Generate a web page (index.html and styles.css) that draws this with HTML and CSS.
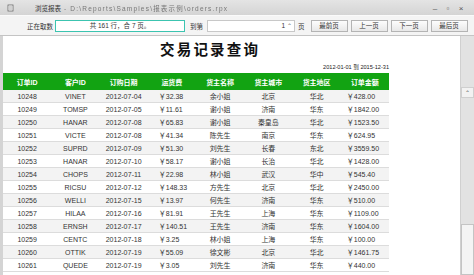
FILE: index.html
```html
<!DOCTYPE html>
<html>
<head>
<meta charset="utf-8">
<link rel="stylesheet" href="styles.css">
</head>
<body>
<div class="window">
  <div class="titlebar">
    <svg class="appicon" width="8" height="8" viewBox="0 0 8 8"><rect x="1" y="1" width="5" height="6" fill="#fff" stroke="#666" stroke-width="0.8"/><path d="M2 3h3M2 5h3" stroke="#666" stroke-width="0.6"/></svg>
    <span class="ttext">浏览报表</span>
    <span class="tpath">- D:\Reports\Samples\报表示例\orders.rpx</span>
    <span class="tspacer"></span>
    <span class="wctl">–</span>
    <span class="wctl">▫</span>
    <span class="wctl">×</span>
  </div>
  <div class="toolbar">
    <span class="lbl">正在取数</span>
    <div class="info">共 161 行，合 7 页。</div>
    <span class="lbl2">到第</span>
    <div class="pageinput"><span>1</span><span class="spin">⌃</span></div>
    <span class="lbl3">页</span>
    <div class="btns">
      <div class="btn">最前页</div>
      <div class="btn">上一页</div>
      <div class="btn">下一页</div>
      <div class="btn">最后页</div>
    </div>
  </div>
  <div class="main">
    <div class="leftedge"></div>
    <div class="content">
      <div class="rtitle">交易记录查询</div>
      <div class="rdate">2012-01-01 到 2015-12-31</div>
      <table class="grid">
        <thead>
          <tr><th>订单ID</th><th>客户ID</th><th>订购日期</th><th>运货费</th><th>货主名称</th><th>货主城市</th><th>货主地区</th><th>订单金额</th></tr>
        </thead>
        <tbody>
          <tr><td>10248</td><td>VINET</td><td>2012-07-04</td><td class="fee">￥32.38</td><td>余小姐</td><td>北京</td><td>华北</td><td class="amt">￥428.00</td></tr>
          <tr><td>10249</td><td>TOMSP</td><td>2012-07-05</td><td class="fee">￥11.61</td><td>谢小姐</td><td>济南</td><td>华东</td><td class="amt">￥1842.00</td></tr>
          <tr><td>10250</td><td>HANAR</td><td>2012-07-08</td><td class="fee">￥65.83</td><td>谢小姐</td><td>秦皇岛</td><td>华北</td><td class="amt">￥1523.50</td></tr>
          <tr><td>10251</td><td>VICTE</td><td>2012-07-08</td><td class="fee">￥41.34</td><td>陈先生</td><td>南京</td><td>华东</td><td class="amt">￥624.95</td></tr>
          <tr><td>10252</td><td>SUPRD</td><td>2012-07-09</td><td class="fee">￥51.30</td><td>刘先生</td><td>长春</td><td>东北</td><td class="amt">￥3559.50</td></tr>
          <tr><td>10253</td><td>HANAR</td><td>2012-07-10</td><td class="fee">￥58.17</td><td>谢小姐</td><td>长治</td><td>华北</td><td class="amt">￥1428.00</td></tr>
          <tr><td>10254</td><td>CHOPS</td><td>2012-07-11</td><td class="fee">￥22.98</td><td>林小姐</td><td>武汉</td><td>华中</td><td class="amt">￥545.40</td></tr>
          <tr><td>10255</td><td>RICSU</td><td>2012-07-12</td><td class="fee">￥148.33</td><td>方先生</td><td>北京</td><td>华北</td><td class="amt">￥2450.00</td></tr>
          <tr><td>10256</td><td>WELLI</td><td>2012-07-15</td><td class="fee">￥13.97</td><td>何先生</td><td>济南</td><td>华东</td><td class="amt">￥510.00</td></tr>
          <tr><td>10257</td><td>HILAA</td><td>2012-07-16</td><td class="fee">￥81.91</td><td>王先生</td><td>上海</td><td>华东</td><td class="amt">￥1109.00</td></tr>
          <tr><td>10258</td><td>ERNSH</td><td>2012-07-17</td><td class="fee">￥140.51</td><td>王先生</td><td>济南</td><td>华东</td><td class="amt">￥1604.00</td></tr>
          <tr><td>10259</td><td>CENTC</td><td>2012-07-18</td><td class="fee">￥3.25</td><td>林小姐</td><td>上海</td><td>华东</td><td class="amt">￥100.00</td></tr>
          <tr><td>10260</td><td>OTTIK</td><td>2012-07-19</td><td class="fee">￥55.09</td><td>徐文彬</td><td>北京</td><td>华北</td><td class="amt">￥1461.75</td></tr>
          <tr><td>10261</td><td>QUEDE</td><td>2012-07-19</td><td class="fee">￥3.05</td><td>刘先生</td><td>济南</td><td>华东</td><td class="amt">￥440.00</td></tr>
        </tbody>
      </table>
    </div>
    <div class="scroll">
      <div class="scrolltop"></div>
      <div class="sbtn">⌃</div>
      <div class="strack"></div>
      <div class="sthumb"></div>
    </div>
  </div>
</div>
</body>
</html>
```

FILE: styles.css
```css
html, body {
  margin: 0;
  padding: 0;
}
body {
  width: 474px;
  height: 275px;
  overflow: hidden;
  font-family: "Liberation Sans", "Noto Sans CJK SC", sans-serif;
  color: #333;
  background: #fff;
}
.window {
  display: flex;
  flex-direction: column;
  width: 474px;
  height: 275px;
}
.titlebar {
  height: 15px;
  flex: none;
  display: flex;
  align-items: center;
  background: linear-gradient(#e4e4e4, #d4d4d4);
  font-size: 6.5px;
  color: #444;
  box-sizing: border-box;
  padding: 1px 9px 0 7px;
}
.appicon {
  flex: none;
  margin-right: 20px;
}
.ttext {
  color: #333;
  margin-right: 3px;
}
.tpath {
  color: #777;
  filter: blur(0.7px);
  letter-spacing: 1.2px;
}
.tspacer {
  flex: 1;
}
.wctl {
  font-size: 8px;
  color: #555;
  margin-left: 5px;
  width: 8px;
  text-align: center;
}
.toolbar {
  height: 21px;
  flex: none;
  box-sizing: border-box;
  background: #f4f4f4;
  border-top: 1px solid #fafafa;
  border-bottom: 1px solid #c4c4c4;
  display: flex;
  align-items: center;
  padding: 0 0 0 27px;
  font-size: 6.5px;
  color: #333;
}
.lbl {
  width: 28px;
}
.info {
  width: 130px;
  height: 12px;
  box-sizing: border-box;
  border: 1px solid #3cc4b0;
  background: #fff;
  text-align: center;
  line-height: 10px;
}
.lbl2 {
  margin-left: 5px;
  width: 17px;
}
.pageinput {
  width: 88px;
  height: 12px;
  box-sizing: border-box;
  border: 1px solid #c8c8c8;
  background: #fff;
  display: flex;
  justify-content: flex-end;
  align-items: center;
  padding-right: 2px;
}
.spin {
  margin-left: 2px;
  font-size: 6px;
  color: #666;
}
.lbl3 {
  margin-left: 3px;
}
.btns {
  display: flex;
  gap: 3px;
  margin-left: 6px;
}
.btn {
  width: 37px;
  height: 12px;
  box-sizing: border-box;
  border: 1px solid #b4b4b4;
  background: linear-gradient(#fdfdfd, #e8e8e8);
  text-align: center;
  line-height: 10px;
  color: #333;
}
.main {
  flex: 1;
  display: flex;
  min-height: 0;
}
.leftedge {
  width: 3px;
  flex: none;
  background: #d4d4d4;
}
.content {
  flex: 1;
  background: #fff;
  overflow: hidden;
}
.rtitle {
  height: 26px;
  line-height: 26px;
  padding-left: 157px;
  font-family: "Noto Sans CJK SC", sans-serif;
  font-weight: bold;
  font-size: 14.5px;
  letter-spacing: 2.2px;
  color: #111;
}
.rdate {
  width: 386px;
  height: 11px;
  line-height: 11px;
  text-align: right;
  font-size: 5.6px;
  color: #222;
}
.grid {
  width: 386px;
  border-collapse: collapse;
  table-layout: fixed;
  font-size: 7px;
}
.grid th {
  height: 17px;
  padding: 0;
  background: #12a312;
  color: #fff;
  font-weight: bold;
  text-align: center;
}
.grid td {
  height: 12px;
  padding: 0;
  text-align: center;
  color: #333;
  border-bottom: 1px solid #dcdcdc;
  white-space: nowrap;
}
.grid tbody tr:nth-child(odd) td {
  background: #f3f3f3;
}
.grid td.fee {
  text-align: left;
  padding-left: 11px;
}
.grid td.amt {
  text-align: left;
  padding-left: 6px;
}
.scroll {
  width: 13px;
  flex: none;
  display: flex;
  flex-direction: column;
  background: #e2e2e2;
  border-left: 1px solid #d0d0d0;
}
.scrolltop {
  height: 51px;
}
.sbtn {
  height: 11px;
  background: #f2f2f2;
  border: 1px solid #cfcfcf;
  box-sizing: border-box;
  font-size: 6px;
  text-align: center;
  line-height: 11px;
  color: #555;
}
.strack {
  height: 126px;
}
.sthumb {
  flex: 1;
  background: #f4f4f4;
  border: 1px solid #c4c4c4;
}
```
